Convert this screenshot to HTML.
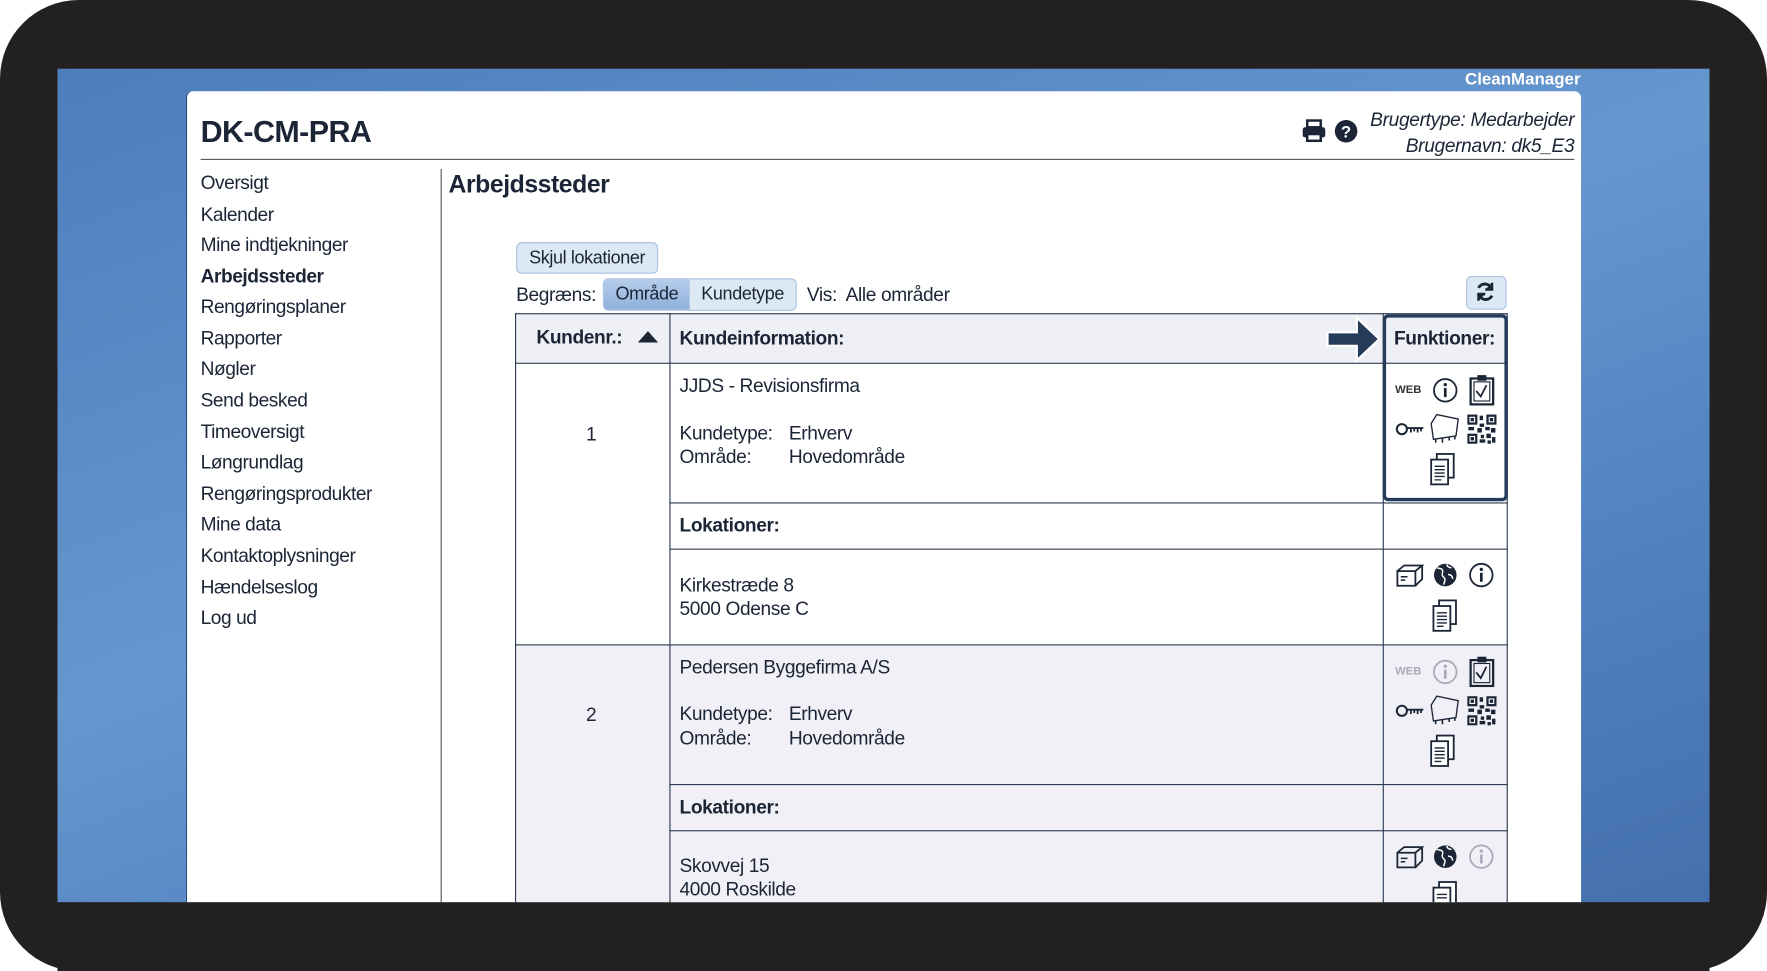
<!DOCTYPE html>
<html><head><meta charset="utf-8"><style>
html,body{margin:0;padding:0;background:#fff;overflow:hidden;width:1767px;height:971px}
#st{position:absolute;left:0;top:0;width:1568px;height:862px;transform-origin:0 0;transform:scale(1.12691,1.12645);font-family:"Liberation Sans",sans-serif;color:#1b2536}
.a{position:absolute;white-space:nowrap}
.t{font-size:17px;letter-spacing:-0.35px;margin-top:1px}
.b{font-weight:bold}
.nav div{position:absolute;left:178px;font-size:17px;letter-spacing:-0.4px;margin-top:1px}
.hl{position:absolute;background:#2c3a52;height:1px}
.vl{position:absolute;background:#2c3a52;width:1px}
svg{position:absolute}
</style></head><body><div id="st">
<div class="a" style="left:0;top:0;width:1568px;height:862px;background:#222120;border-radius:70px"></div>
<div class="a" style="left:51px;top:61px;width:1466px;height:740px;background:linear-gradient(160deg,#4d7dbd 0%,#6697cf 45%,#5384c3 70%,#4470ad 100%)"></div>
<div class="a b" style="left:1300px;top:62px;color:#fff;font-size:15px">CleanManager</div>
<div class="a" style="left:165px;top:81px;width:1237px;height:720px;background:#fff;border-radius:6px 6px 0 0;border-left:1px solid #2a4a80"></div>
<div class="a b" style="left:178px;top:102px;font-size:27px;letter-spacing:-0.5px">DK-CM-PRA</div>
<div class="hl" style="left:178px;top:141px;width:1219px;background:#555"></div>
<svg style="left:1155px;top:105px" width="22" height="22" viewBox="0 0 22 22"><rect x="5" y="2" width="12" height="6" fill="none" stroke="#1b2536" stroke-width="2.2"/><rect x="1" y="8" width="20" height="9" rx="2" fill="#1b2536"/><rect x="5" y="14" width="12" height="6" fill="#fff" stroke="#1b2536" stroke-width="2.2"/></svg>
<svg style="left:1184px;top:106px" width="21" height="21" viewBox="0 0 21 21"><circle cx="10.5" cy="10.5" r="10" fill="#1b2536"/><text x="10.5" y="16" text-anchor="middle" font-family="Liberation Sans" font-weight="bold" font-size="15" fill="#fff">?</text></svg>
<div class="a" style="right:171px;top:97px;font-size:17px;font-style:italic;letter-spacing:-0.3px;text-align:right">Brugertype: Medarbejder</div>
<div class="a" style="right:171px;top:120px;font-size:17px;font-style:italic;letter-spacing:-0.3px;text-align:right">Brugernavn: dk5_E3</div>
<div class="nav">
<div style="top:152px">Oversigt</div><div style="top:180px">Kalender</div><div style="top:207px">Mine indtjekninger</div><div style="top:235px;font-weight:bold">Arbejdssteder</div><div style="top:262px">Rengøringsplaner</div><div style="top:290px">Rapporter</div><div style="top:317px">Nøgler</div><div style="top:345px">Send besked</div><div style="top:373px">Timeoversigt</div><div style="top:400px">Løngrundlag</div><div style="top:428px">Rengøringsprodukter</div><div style="top:455px">Mine data</div><div style="top:483px">Kontaktoplysninger</div><div style="top:511px">Hændelseslog</div><div style="top:538px">Log ud</div>
</div>
<div class="vl" style="left:391px;top:150px;height:651px;background:#555"></div>
<div class="a b" style="left:398px;top:151px;font-size:22px;letter-spacing:-0.4px">Arbejdssteder</div>
<div class="a t" style="left:458px;top:215px;width:124px;height:26px;border:1px solid #a9c2e0;border-radius:5px;background:#dde8f5;text-align:center;line-height:27px;font-size:16px;margin-top:0">Skjul lokationer</div>
<div class="a t" style="left:458px;top:251px">Begræns:</div>
<div class="a" style="left:535px;top:247px;width:170px;height:27px;border:1px solid #a9c2e0;border-radius:5px;background:#dde8f5;overflow:hidden">
<div class="a t" style="left:0;top:0;width:76px;height:27px;background:linear-gradient(#b5cdea,#8fb0dc);text-align:center;line-height:27px;font-size:16px;margin-top:0">Område</div>
<div class="a t" style="left:76px;top:0;width:94px;height:27px;text-align:center;line-height:27px;font-size:16px;margin-top:0">Kundetype</div></div>
<div class="a t" style="left:716px;top:251px">Vis:&nbsp; Alle områder</div>
<div class="a" style="left:1301px;top:245px;width:34px;height:28px;border:1px solid #a9c2e0;border-radius:5px;background:#dde8f5"></div>
<svg style="left:1308px;top:249px" width="20" height="20" viewBox="0 0 20 20" fill="none" stroke="#1b2536" stroke-width="2.6"><path d="M16 8A6.5 6.5 0 0 0 4 6.5"/><path d="M4 12a6.5 6.5 0 0 0 12 1.5"/><path d="M16 2v6h-6" stroke-width="2.2" fill="#1b2536"/><path d="M4 18v-6h6" stroke-width="2.2" fill="#1b2536"/></svg>
<!-- table -->
<div class="a" style="left:457px;top:278px;width:881px;height:44px;background:#efeff6"></div>
<div class="a" style="left:457px;top:572px;width:881px;height:229px;background:#f0f0f6"></div>
<div class="a" style="left:594px;top:446px;width:633px;height:41px;background:#fff"></div>
<div class="a" style="left:594px;top:487px;width:744px;height:85px;background:#fff"></div>
<div class="a" style="left:594px;top:737px;width:633px;height:64px;background:#f0f0f6"></div>
<div class="hl" style="left:457px;top:278px;width:881px"></div>
<div class="hl" style="left:457px;top:322px;width:881px"></div>
<div class="hl" style="left:594px;top:446px;width:744px"></div>
<div class="hl" style="left:594px;top:487px;width:744px"></div>
<div class="hl" style="left:457px;top:572px;width:881px"></div>
<div class="hl" style="left:594px;top:696px;width:744px"></div>
<div class="hl" style="left:594px;top:737px;width:744px"></div>
<div class="vl" style="left:457px;top:278px;height:523px"></div>
<div class="vl" style="left:594px;top:278px;height:523px"></div>
<div class="vl" style="left:1227px;top:278px;height:523px"></div>
<div class="vl" style="left:1337px;top:278px;height:523px"></div>
<div class="a b t" style="left:476px;top:289px">Kundenr.:</div>
<svg style="left:566px;top:293px" width="18" height="12"><path d="M0 11L9 1L18 11Z" fill="#1b2536"/></svg>
<div class="a b t" style="left:603px;top:290px">Kundeinformation:</div>
<svg style="left:1174px;top:280px" width="52" height="42"><path d="M4 15H30V2L50 21L30 40V27H4Z" fill="#263a5a" stroke="#fff" stroke-width="2"/></svg>
<div class="a b t" style="left:1237px;top:290px">Funktioner:</div>
<div class="a" style="left:1227px;top:279px;width:105px;height:160px;border:3px solid #263a5a;border-radius:5px"></div>
<div class="a t" style="left:520px;top:375px">1</div>
<div class="a t" style="left:603px;top:332px">JJDS - Revisionsfirma</div>
<div class="a t" style="left:603px;top:374px">Kundetype:</div><div class="a t" style="left:700px;top:374px">Erhverv</div>
<div class="a t" style="left:603px;top:395px">Område:</div><div class="a t" style="left:700px;top:395px">Hovedområde</div>
<div class="a b t" style="left:603px;top:456px">Lokationer:</div>
<div class="a t" style="left:603px;top:509px">Kirkestræde 8</div>
<div class="a t" style="left:603px;top:530px">5000 Odense C</div>
<div class="a t" style="left:520px;top:624px">2</div>
<div class="a t" style="left:603px;top:582px">Pedersen Byggefirma A/S</div>
<div class="a t" style="left:603px;top:623px">Kundetype:</div><div class="a t" style="left:700px;top:623px">Erhverv</div>
<div class="a t" style="left:603px;top:645px">Område:</div><div class="a t" style="left:700px;top:645px">Hovedområde</div>
<div class="a b t" style="left:603px;top:706px">Lokationer:</div>
<div class="a t" style="left:603px;top:758px">Skovvej 15</div>
<div class="a t" style="left:603px;top:779px">4000 Roskilde</div>
<!-- function icons row1 -->
<div class="a b" style="left:1238px;top:341px;font-size:10px;color:#333">WEB</div>
<svg style="left:1271px;top:335px" width="23" height="23"><circle cx="11.5" cy="11.5" r="10" fill="none" stroke="#1b2536" stroke-width="1.6"/><circle cx="11.5" cy="6.5" r="1.5" fill="#1b2536"/><rect x="10.3" y="9.5" width="2.4" height="8" fill="#1b2536"/></svg>
<svg style="left:1303px;top:332px" width="24" height="28"><rect x="2" y="4" width="20" height="23" fill="none" stroke="#1b2536" stroke-width="2"/><rect x="5" y="7" width="14" height="17" fill="none" stroke="#1b2536" stroke-width="1"/><rect x="8" y="1" width="8" height="5" fill="#1b2536"/><path d="M7 15l4 5 5-10" fill="none" stroke="#1b2536" stroke-width="1.6"/></svg>
<svg style="left:1238px;top:373px" width="26" height="16"><circle cx="6" cy="8" r="4.5" fill="none" stroke="#1b2536" stroke-width="1.8"/><path d="M10.5 7H25M14 7v4M17 7v3M20 7v4M23 7v3" stroke="#1b2536" stroke-width="1.6" fill="none"/></svg>
<svg style="left:1268px;top:366px" width="28" height="28"><path d="M7 2L26 6L24 21L4 24L2 10Z" fill="none" stroke="#1b2536" stroke-width="1.2"/><path d="M6 24v3M12 23v4M18 22v3M23 21v3" stroke="#1b2536" stroke-width="1.4"/></svg>
<svg style="left:1302px;top:368px" width="26" height="26"><g fill="#1b2536"><rect x="0" y="0" width="9" height="9"/><rect x="17" y="0" width="9" height="9"/><rect x="0" y="17" width="9" height="9"/></g><g fill="#fff"><rect x="2" y="2" width="5" height="5"/><rect x="19" y="2" width="5" height="5"/><rect x="2" y="19" width="5" height="5"/></g><g fill="#1b2536"><rect x="3" y="3" width="3" height="3"/><rect x="20" y="3" width="3" height="3"/><rect x="3" y="20" width="3" height="3"/><rect x="11" y="1" width="3" height="4"/><rect x="11" y="8" width="4" height="3"/><rect x="1" y="11" width="5" height="3"/><rect x="9" y="12" width="4" height="4"/><rect x="16" y="11" width="4" height="3"/><rect x="21" y="12" width="4" height="4"/><rect x="12" y="18" width="3" height="3"/><rect x="17" y="17" width="4" height="4"/><rect x="22" y="20" width="3" height="5"/><rect x="11" y="22" width="5" height="3"/><rect x="18" y="23" width="3" height="3"/></g></svg>
<svg style="left:1268px;top:402px" width="24" height="30"><rect x="7" y="1" width="15" height="21" fill="#fff" stroke="#1b2536" stroke-width="1.6"/><rect x="2" y="6" width="15" height="22" fill="#fff" stroke="#1b2536" stroke-width="1.6"/><path d="M5 12h9M5 15h9M5 18h9M5 21h9M5 24h6" stroke="#1b2536" stroke-width="1.2"/></svg>
<!-- location icons row1 -->
<svg style="left:1239px;top:500px" width="25" height="22"><path d="M1 7h16v13H1zM1 7l6-5h16l-6 5M23 2v12l-6 6" fill="none" stroke="#1b2536" stroke-width="1.6"/><path d="M4 12h6M4 15h4" stroke="#1b2536" stroke-width="1.4"/></svg>
<svg style="left:1271px;top:499px" width="23" height="23"><circle cx="11.5" cy="11.5" r="10" fill="#1b2536"/><path d="M4 5c2 1 4 0 5 2s-1 3 0 5 3 2 2 5l-1 3M13 2c0 2 2 3 4 3M14 11c2 0 4 1 4 4" stroke="#fff" stroke-width="1.3" fill="none"/></svg>
<svg style="left:1303px;top:499px" width="23" height="23"><circle cx="11.5" cy="11.5" r="10" fill="none" stroke="#1b2536" stroke-width="1.6"/><circle cx="11.5" cy="6.5" r="1.5" fill="#1b2536"/><rect x="10.3" y="9.5" width="2.4" height="8" fill="#1b2536"/></svg>
<svg style="left:1270px;top:532px" width="24" height="30"><rect x="7" y="1" width="15" height="21" fill="#fff" stroke="#1b2536" stroke-width="1.6"/><rect x="2" y="6" width="15" height="22" fill="#fff" stroke="#1b2536" stroke-width="1.6"/><path d="M5 12h9M5 15h9M5 18h9M5 21h9M5 24h6" stroke="#1b2536" stroke-width="1.2"/></svg>
<!-- row2 -->
<div class="a b" style="left:1238px;top:591px;font-size:10px;color:#aab">WEB</div>
<svg style="left:1271px;top:585px" width="23" height="23"><circle cx="11.5" cy="11.5" r="10" fill="none" stroke="#aab" stroke-width="1.6"/><circle cx="11.5" cy="6.5" r="1.5" fill="#aab"/><rect x="10.3" y="9.5" width="2.4" height="8" fill="#aab"/></svg>
<svg style="left:1303px;top:582px" width="24" height="28"><rect x="2" y="4" width="20" height="23" fill="none" stroke="#1b2536" stroke-width="2"/><rect x="5" y="7" width="14" height="17" fill="none" stroke="#1b2536" stroke-width="1"/><rect x="8" y="1" width="8" height="5" fill="#1b2536"/><path d="M7 15l4 5 5-10" fill="none" stroke="#1b2536" stroke-width="1.6"/></svg>
<svg style="left:1238px;top:623px" width="26" height="16"><circle cx="6" cy="8" r="4.5" fill="none" stroke="#1b2536" stroke-width="1.8"/><path d="M10.5 7H25M14 7v4M17 7v3M20 7v4M23 7v3" stroke="#1b2536" stroke-width="1.6" fill="none"/></svg>
<svg style="left:1268px;top:616px" width="28" height="28"><path d="M7 2L26 6L24 21L4 24L2 10Z" fill="none" stroke="#1b2536" stroke-width="1.2"/><path d="M6 24v3M12 23v4M18 22v3M23 21v3" stroke="#1b2536" stroke-width="1.4"/></svg>
<svg style="left:1302px;top:618px" width="26" height="26"><g fill="#1b2536"><rect x="0" y="0" width="9" height="9"/><rect x="17" y="0" width="9" height="9"/><rect x="0" y="17" width="9" height="9"/></g><g fill="#fff"><rect x="2" y="2" width="5" height="5"/><rect x="19" y="2" width="5" height="5"/><rect x="2" y="19" width="5" height="5"/></g><g fill="#1b2536"><rect x="3" y="3" width="3" height="3"/><rect x="20" y="3" width="3" height="3"/><rect x="3" y="20" width="3" height="3"/><rect x="11" y="1" width="3" height="4"/><rect x="11" y="8" width="4" height="3"/><rect x="1" y="11" width="5" height="3"/><rect x="9" y="12" width="4" height="4"/><rect x="16" y="11" width="4" height="3"/><rect x="21" y="12" width="4" height="4"/><rect x="12" y="18" width="3" height="3"/><rect x="17" y="17" width="4" height="4"/><rect x="22" y="20" width="3" height="5"/><rect x="11" y="22" width="5" height="3"/><rect x="18" y="23" width="3" height="3"/></g></svg>
<svg style="left:1268px;top:652px" width="24" height="30"><rect x="7" y="1" width="15" height="21" fill="#fff" stroke="#1b2536" stroke-width="1.6"/><rect x="2" y="6" width="15" height="22" fill="#fff" stroke="#1b2536" stroke-width="1.6"/><path d="M5 12h9M5 15h9M5 18h9M5 21h9M5 24h6" stroke="#1b2536" stroke-width="1.2"/></svg>
<svg style="left:1239px;top:750px" width="25" height="22"><path d="M1 7h16v13H1zM1 7l6-5h16l-6 5M23 2v12l-6 6" fill="none" stroke="#1b2536" stroke-width="1.6"/><path d="M4 12h6M4 15h4" stroke="#1b2536" stroke-width="1.4"/></svg>
<svg style="left:1271px;top:749px" width="23" height="23"><circle cx="11.5" cy="11.5" r="10" fill="#1b2536"/><path d="M4 5c2 1 4 0 5 2s-1 3 0 5 3 2 2 5l-1 3M13 2c0 2 2 3 4 3M14 11c2 0 4 1 4 4" stroke="#fff" stroke-width="1.3" fill="none"/></svg>
<svg style="left:1303px;top:749px" width="23" height="23"><circle cx="11.5" cy="11.5" r="10" fill="none" stroke="#aab" stroke-width="1.6"/><circle cx="11.5" cy="6.5" r="1.5" fill="#aab"/><rect x="10.3" y="9.5" width="2.4" height="8" fill="#aab"/></svg>
<svg style="left:1270px;top:782px" width="24" height="19"><rect x="7" y="1" width="15" height="21" fill="#fff" stroke="#1b2536" stroke-width="1.6"/><rect x="2" y="6" width="15" height="22" fill="#fff" stroke="#1b2536" stroke-width="1.6"/><path d="M5 12h9M5 15h9" stroke="#1b2536" stroke-width="1.2"/></svg>
<div class="a" style="left:51px;top:801px;width:1466px;height:61px;background:#222120"></div>
</div></body></html>
